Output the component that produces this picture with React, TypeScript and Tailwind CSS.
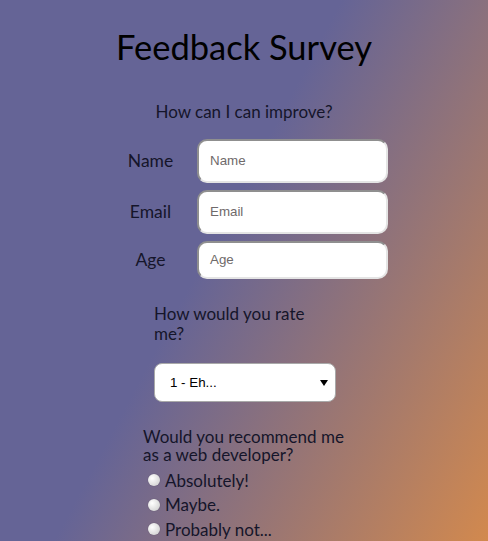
import React from "react";

const inputCls =
  "w-[191px] rounded-[10px] bg-white border-2 border-t-[#8f8f8f] border-l-[#8f8f8f] border-b-[#e4e4e4] border-r-[#e4e4e4] pl-[11px] text-[13.33px] text-[#6f6a6a] flex items-center";

function Row({ label, h, mt }: { label: string; h: string; mt: string }) {
  return (
    <div className={`flex items-center pl-[104px] ${mt}`}>
      <div className="w-[93px] text-center text-[17.5px] text-[#15152a]">{label}</div>
      <div className={`${inputCls} ${h}`} style={{ fontFamily: '"Liberation Sans", Arial, sans-serif' }}>
        {label}
      </div>
    </div>
  );
}

function Radio({ label }: { label: string }) {
  return (
    <div className="flex items-center h-[24.5px]">
      <span className="ml-[5px] w-[12px] h-[12px] rounded-full bg-[radial-gradient(circle_at_35%_35%,#ffffff,#d6d6d6_75%)] shadow-[0_0_1px_rgba(0,0,0,0.35)]" />
      <span className="ml-[5px] text-[17px] text-[#15152a]">{label}</span>
    </div>
  );
}

export default function App() {
  return (
    <div
      className="min-h-screen w-full bg-[linear-gradient(118deg,#656496_44%,#d2894e)] overflow-hidden"
      style={{ fontFamily: 'Lato, "Open Sans", sans-serif' }}
    >
      <h1 className="pt-[26px] text-center text-[34.5px] leading-[42px] text-black">Feedback Survey</h1>
      <p className="mt-[33px] text-center text-[17px] leading-[22px] text-[#15152a]">How can I can improve?</p>
      <Row label="Name" h="h-[44px]" mt="mt-[16px]" />
      <Row label="Email" h="h-[44px]" mt="mt-[7px]" />
      <Row label="Age" h="h-[38px]" mt="mt-[7px]" />
      <div className="pl-[154px] mt-[25px]">
        <p className="w-[165px] text-[17px] leading-[19.5px] text-[#15152a]">How would you rate me?</p>
        <div
          className="mt-[20px] w-[182px] h-[39px] rounded-[8px] bg-white border border-[#a9a9a9] flex items-center justify-between pl-[15px] pr-[7px] text-[13.33px] text-black"
          style={{ fontFamily: '"Liberation Sans", Arial, sans-serif' }}
        >
          <span>1 - Eh...</span>
          <svg width="8" height="6" viewBox="0 0 8 6">
            <path d="M0 0H8L4 6Z" fill="#000" />
          </svg>
        </div>
      </div>
      <div className="pl-[143px] mt-[26px]">
        <p className="w-[215px] text-[17px] leading-[18px] text-[#15152a]">Would you recommend me as a web developer?</p>
        <div className="mt-[4px]">
          <Radio label="Absolutely!" />
          <Radio label="Maybe." />
          <Radio label="Probably not..." />
        </div>
      </div>
    </div>
  );
}
